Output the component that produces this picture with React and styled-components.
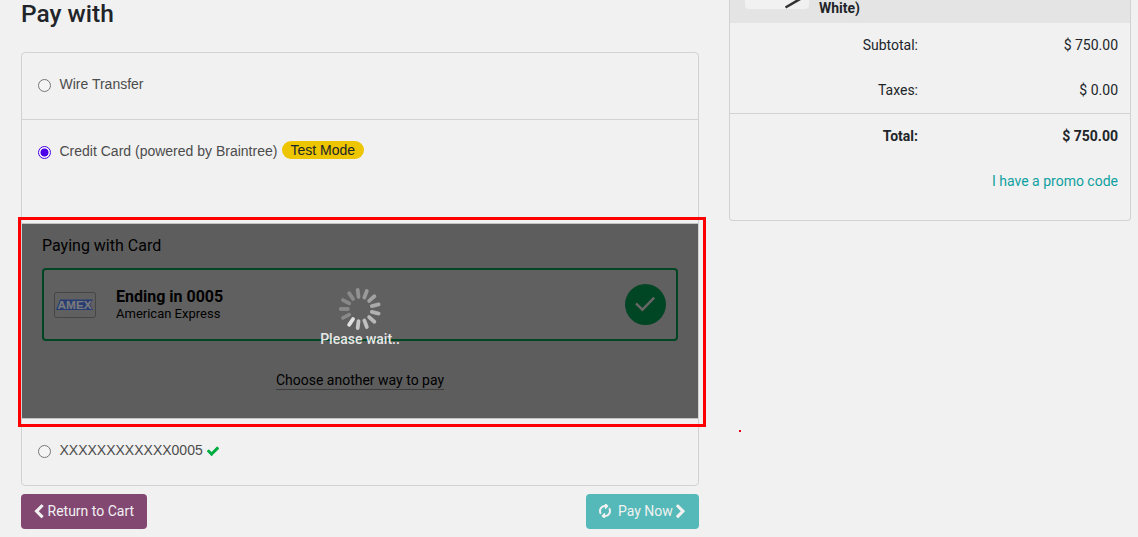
import React from "react";
import styled, { createGlobalStyle } from "styled-components";

const Global = createGlobalStyle`
  *, *::before, *::after { box-sizing: border-box; }
  body {
    margin: 0;
    background: #f1f1f1;
    color: #212529;
    font: 14px/21px Roboto, sans-serif;
    overflow: hidden;
  }
`;

const Page = styled.main`
  display: flex;
  align-items: flex-start;
  gap: 30px;
  height: 537px;
  padding-left: 21px;
  overflow: hidden;
`;

const Payment = styled.section`
  width: 678px;
`;

const Title = styled.h3`
  margin: 0 0 24px;
  height: 28px;
  font-size: 24.5px;
  line-height: 28px;
  font-weight: 500;
`;

const Methods = styled.div`
  height: 434px;
  border: 1px solid #d2d2d2;
  border-radius: 4px;
`;

const Method = styled.label`
  display: flex;
  align-items: flex-start;
  height: ${(p) => p.$height}px;
  padding: ${(p) => p.$top}px 16px 0;
  border-bottom: ${(p) => (p.$divided ? "1px solid #d2d2d2" : "0")};
  color: #4c4c4c;
  font-family: "Liberation Sans", Arial, sans-serif;
  font-size: 14px;
`;

const Radio = styled.input`
  appearance: none;
  width: 13px;
  height: 13px;
  margin: 5px 8.5px 0 0;
  border: 1px solid #767676;
  border-radius: 50%;
  background: #f4f4f4;
  &:checked {
    border-color: #4b00e8;
    background: radial-gradient(circle, #4b00e8 3.6px, #f4f4f4 4.4px);
  }
`;

const Badge = styled.span`
  height: 18px;
  margin: 0 0 0 4.5px;
  padding: 0 8.6px;
  border-radius: 9px;
  background: #edc500;
  color: #212529;
  line-height: 18px;
`;

const DropIn = styled.div`
  position: relative;
  height: 196px;
  padding: 10px 20px 0;
  border: solid #c3c3c3;
  border-width: 1px 0;
  background: #5d5d5d;
  color: #000;
`;

const Highlight = styled.div`
  position: absolute;
  inset: -7px -8px -9px -4px;
  border: 3px solid #fe0000;
`;

const Heading = styled.div`
  height: 34px;
  font-size: 16px;
  line-height: 23px;
`;

const SavedCard = styled.div`
  display: flex;
  align-items: center;
  height: 73px;
  padding: 0 10px;
  border: 2px solid #004524;
  border-radius: 4px;
  background: #606060;
`;

const Brand = styled.svg`
  width: 42px;
  height: 26px;
  margin-right: 20px;
`;

const CardText = styled.div`
  flex: 1;
  font-size: 13px;
  line-height: 16px;
  strong {
    display: block;
    font-size: 16px;
    line-height: 19px;
  }
`;

const Tick = styled.svg`
  width: 41px;
  height: 41px;
`;

const OtherWay = styled.div`
  display: flex;
  justify-content: center;
  margin-top: 30px;
  span {
    height: 19px;
    line-height: 18px;
    border-bottom: 1px solid #3c3c3c;
  }
`;

const Waiting = styled.div`
  position: absolute;
  left: 0;
  right: 0;
  top: 63px;
  display: flex;
  flex-direction: column;
  align-items: center;
  color: #e8e8e8;
  font-weight: 500;
  line-height: 16px;
`;

const SpinnerSvg = styled.svg`
  width: 44px;
  height: 44px;
`;

const Actions = styled.div`
  display: flex;
  justify-content: space-between;
  margin-top: 8px;
`;

const Button = styled.button`
  display: flex;
  align-items: center;
  width: ${(p) => p.$width}px;
  height: 35px;
  padding: 0 ${(p) => p.$pad}px;
  border: 0;
  border-radius: 4px;
  background: ${(p) => p.$bg};
  color: #f1f1f1;
  font: 14px/21px Roboto, sans-serif;
  white-space: nowrap;
`;

const Glyph = styled.svg`
  width: ${(p) => p.$size}px;
  height: ${(p) => p.$size}px;
  margin: ${(p) => p.$margin || 0};
  fill: ${(p) => p.$color || "currentColor"};
  flex: none;
`;

const Summary = styled.aside`
  width: 402px;
  height: 221px;
  border: 1px solid #d2d2d2;
  border-top: 0;
  border-radius: 0 0 4px 4px;
`;

const Product = styled.div`
  display: flex;
  gap: 10px;
  height: 23px;
  padding-left: 15px;
  background: #e4e4e4;
  font-weight: 700;
  line-height: 16px;
`;

const Thumb = styled.svg`
  width: 64px;
  height: 9px;
  border-radius: 0 0 4px 4px;
  background: #f1f1f1;
`;

const Line = styled.div`
  display: grid;
  grid-template-columns: 188px 1fr;
  height: ${(p) => (p.$total ? 46 : 45)}px;
  padding: 12px 12px 0 0;
  border-top: ${(p) => (p.$total ? "1px solid #d2d2d2" : "0")};
  font-weight: ${(p) => (p.$total ? 700 : 400)};
  text-align: right;
`;

const Promo = styled.div`
  padding: 12px 12px 0 0;
  color: #0ea0a0;
  text-align: right;
`;

const Stray = styled.i`
  position: absolute;
  left: 739px;
  top: 430px;
  width: 2px;
  height: 2px;
  background: #e0001b;
`;

const icons = {
  left: "M1427 301l-531 531 531 531q19 19 19 45t-19 45l-166 166q-19 19-45 19t-45-19l-742-742q-19-19-19-45t19-45l742-742q19-19 45-19t45 19l166 166q19 19 19 45t-19 45z",
  right: "M1363 877l-742 742q-19 19-45 19t-45-19l-166-166q-19-19-19-45t19-45l531-531-531-531q-19-19-19-45t19-45l166-166q19-19 45-19t45 19l742 742q19 19 19 45t-19 45z",
  check: "M1671 566q0 40-28 68l-724 724-136 136q-28 28-68 28t-68-28l-136-136-362-362q-28-28-28-68t28-68l136-136q28-28 68-28t68 28l294 295 656-657q28-28 68-28t68 28l136 136q28 28 28 68z",
  refresh: "M1639 1056q0 5-1 7-64 268-268 434.5t-478 166.5q-146 0-282.5-55t-243.5-157l-129 129q-19 19-45 19t-45-19-19-45v-448q0-26 19-45t45-19h448q26 0 45 19t19 45-19 45l-137 137q71 66 161 102t187 36q134 0 250-65t186-179q11-17 53-117 8-23 30-23h192q13 0 22.5 9.5t9.5 22.5zm25-800v448q0 26-19 45t-45 19h-448q-26 0-45-19t-19-45 19-45l138-138q-148-137-349-137-134 0-250 65t-186 179q-11 17-53 117-8 23-30 23h-199q-13 0-22.5-9.5t-9.5-22.5v-7q65-268 270-434.5t480-166.5q146 0 284 55.5t245 156.5l130-129q19-19 45-19t45 19 19 45z",
};

function Icon({ name, margin, color, size = 14, rotate = 0 }) {
  return (
    <Glyph viewBox="0 0 1792 1792" $size={size} $margin={margin} $color={color}>
      <path transform={`rotate(${rotate} 896 896)`} d={icons[name]} />
    </Glyph>
  );
}

function Spinner() {
  const spokes = Array.from({ length: 13 }, (_, i) => i);
  return (
    <SpinnerSvg viewBox="-22 -22 44 44">
      {spokes.map((i) => (
        <line
          key={i}
          x1="12.2"
          x2="19.2"
          stroke="#fff"
          strokeWidth="3.8"
          strokeLinecap="round"
          opacity={i === 0 ? 0.82 : Math.max(0.25, 0.7 - i * 0.048)}
          transform={`rotate(${124.6 - i * 27.69})`}
        />
      ))}
    </SpinnerSvg>
  );
}

export default function App() {
  return (
    <>
      <Global />
      <Page>
        <Payment>
          <Title>Pay with</Title>
          <Methods>
            <Method $height={67} $top={21} $divided>
              <Radio type="radio" name="method" />
              Wire Transfer
            </Method>
            <Method $height={103} $top={21}>
              <Radio type="radio" name="method" defaultChecked />
              Credit Card (powered by Braintree)
              <Badge>Test Mode</Badge>
            </Method>
            <DropIn>
              <Heading>Paying with Card</Heading>
              <SavedCard>
                <Brand viewBox="0 0 42 26">
                  <rect x=".5" y=".5" width="41" height="25" rx="2" fill="none" stroke="#454545" />
                  <path d="M6 7.6H38.8L36.2 12.8l2.8 5.2H2z" fill="#263c72" />
                  <text
                    x="3.6" y="16.7" textLength="34" lengthAdjust="spacingAndGlyphs"
                    fontFamily="Liberation Sans" fontWeight="700" fontSize="11"
                    fill="#7a7a7a" stroke="#7a7a7a" strokeWidth=".2"
                  >
                    AMEX
                  </text>
                </Brand>
                <CardText>
                  <strong>Ending in 0005</strong>
                  American Express
                </CardText>
                <Tick viewBox="0 0 41 41">
                  <circle cx="20.5" cy="20.5" r="20.5" fill="#004524" />
                  <path d="M11 19.3l6.4 6.4L29.2 13.6" fill="none" stroke="#666" strokeWidth="2.4" />
                </Tick>
              </SavedCard>
              <OtherWay>
                <span>Choose another way to pay</span>
              </OtherWay>
              <Waiting>
                <Spinner />
                Please wait..
              </Waiting>
              <Highlight />
            </DropIn>
            <Method $height={66} $top={21}>
              <Radio type="radio" name="method" />
              XXXXXXXXXXXX0005
              <Icon name="check" color="#00ad42" margin="3.5px 0 0 3px" />
            </Method>
          </Methods>
          <Actions>
            <Button $width={126} $pad={10} $bg="#834872">
              <Icon name="left" size={15.5} margin="0 1px 0 0" />
              Return to Cart
            </Button>
            <Button $width={113} $pad={12} $bg="#54b9b8">
              <Icon name="refresh" rotate={-45} margin="-1px 6px 0 0" />
              Pay Now
              <Icon name="right" size={15.5} margin="0" />
            </Button>
          </Actions>
        </Payment>
        <Summary>
          <Product>
            <Thumb viewBox="0 0 64 9">
              <path d="M40.5 7.5L56-1.5" stroke="#333" strokeWidth="2.6" />
            </Thumb>
            White)
          </Product>
          <Line><span>Subtotal:</span><span>$ 750.00</span></Line>
          <Line><span>Taxes:</span><span>$ 0.00</span></Line>
          <Line $total><span>Total:</span><span>$ 750.00</span></Line>
          <Promo>I have a promo code</Promo>
        </Summary>
      </Page>
      <Stray />
    </>
  );
}
